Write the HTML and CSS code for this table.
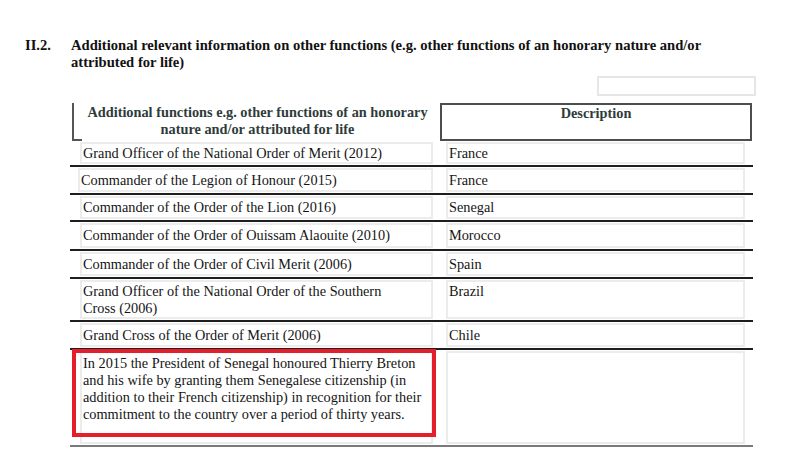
FILE: index.html
```html
<!DOCTYPE html>
<html>
<head>
<meta charset="utf-8">
<link rel="stylesheet" href="styles.css">
</head>
<body>
<div class="page">
  <div class="section-head">
    <div class="num">II.2.</div>
    <div class="title">Additional relevant information on other functions (e.g. other functions of an honorary nature and/or attributed for life)</div>
  </div>
  <div class="filler"></div>
  <div class="table">
    <div class="head-row">
      <div class="head-left">Additional functions e.g. other functions of an honorary nature and/or attributed for life</div>
      <div class="head-right">Description</div>
    </div>
    <div class="row h26"><div class="cell-l">Grand Officer of the National Order of Merit (2012)</div><div class="cell-r">France</div></div>
    <div class="row h28"><div class="cell-l shift">Commander of the Legion of Honour (2015)</div><div class="cell-r">France</div></div>
    <div class="row h27"><div class="cell-l">Commander of the Order of the Lion (2016)</div><div class="cell-r">Senegal</div></div>
    <div class="row h29"><div class="cell-l">Commander of the Order of Ouissam Alaouite (2010)</div><div class="cell-r">Morocco</div></div>
    <div class="row h28"><div class="cell-l">Commander of the Order of Civil Merit (2006)</div><div class="cell-r">Spain</div></div>
    <div class="row h43 top"><div class="cell-l">Grand Officer of the National Order of the Southern<br>Cross (2006)</div><div class="cell-r">Brazil</div></div>
    <div class="row h28"><div class="cell-l">Grand Cross of the Order of Merit (2006)</div><div class="cell-r">Chile</div></div>
    <div class="row last top">
      <div class="cell-l">In 2015 the President of Senegal honoured Thierry Breton<br>and his wife by granting them Senegalese citizenship (in<br>addition to their French citizenship) in recognition for their<br>commitment to the country over a period of thirty years.</div>
      <div class="cell-r"></div>
      <div class="highlight"></div>
    </div>
  </div>
</div>
</body>
</html>
```

FILE: styles.css
```css
html, body {
  margin: 0;
  padding: 0;
  background: #ffffff;
}
body {
  font-family: "Liberation Serif", "Times New Roman", serif;
  font-size: 14.3px;
  line-height: 17px;
  color: #151515;
}
.page {
  padding-top: 37px;
}
.section-head {
  display: flex;
  padding-left: 25px;
  font-weight: bold;
  font-size: 14.6px;
  color: #111;
}
.section-head .num {
  width: 46px;
  flex: none;
}
.section-head .title {
  width: 640px;
}
.filler {
  margin-top: 5px;
  margin-left: 597px;
  width: 159px;
  height: 20px;
  box-sizing: border-box;
  border: 2px solid #e6e6e6;
}
.table {
  margin-left: 70px;
  width: 683px;
  margin-top: 7px;
}
.head-row {
  display: flex;
  height: 38px;
  color: #2f3b3b;
  font-weight: bold;
}
.head-left {
  position: relative;
  margin-left: 2px;
  width: 363px;
  box-sizing: border-box;
  border-left: 2px solid #555;
  padding-top: 1px;
  padding-left: 6px;
  text-align: center;
}
.head-left::after {
  content: "";
  position: absolute;
  left: -2px;
  bottom: 0;
  width: 10px;
  height: 2px;
  background: #555;
}
.head-right {
  margin-left: 5px;
  width: 312px;
  box-sizing: border-box;
  border: 2px solid #4d4d4d;
  text-align: center;
  padding-top: 0;
}
.row {
  display: grid;
  grid-template-columns: 370px 312px;
  box-sizing: border-box;
  border-bottom: 2px solid #1e1e1e;
  position: relative;
}
.h26 { height: 26px; }
.h27 { height: 27px; }
.h28 { height: 28px; }
.h29 { height: 29px; }
.h43 { height: 43px; }
.row.last {
  height: 97px;
  border-bottom: 2px solid #7a7a7a;
}
.cell-l, .cell-r {
  box-sizing: border-box;
  border: 2px solid #ececec;
  margin: 1px 0 1px 0;
  padding: 0 2px 0 1px;
  overflow: hidden;
  display: flex;
  align-items: center;
}
.row.top .cell-l, .row.top .cell-r {
  display: block;
  padding-top: 1px;
}
.row.last .cell-l {
  padding-top: 2px;
}
.cell-l {
  margin-left: 10px;
  width: 353px;
}
.cell-l.shift {
  margin-left: 8px;
  width: 355px;
  padding-left: 1px;
}
.cell-r {
  margin-left: 6px;
  width: 299px;
}
.highlight {
  position: absolute;
  left: 2px;
  top: -1px;
  width: 364px;
  height: 88px;
  box-sizing: border-box;
  border: 4px solid #e51e2b;
}
```
